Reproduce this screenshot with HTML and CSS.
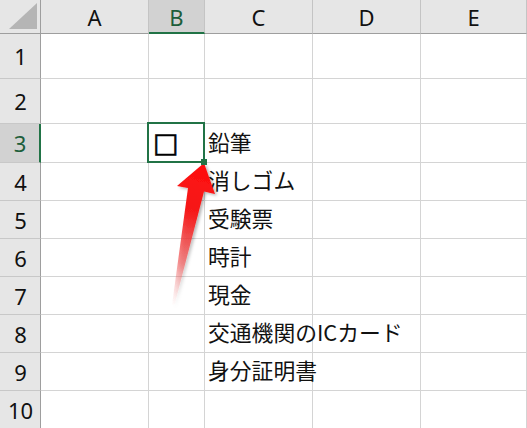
FILE: index.html
```html
<!DOCTYPE html>
<html lang="ja">
  <head>
    <meta charset="UTF-8" />
    <title>チェックリスト</title>
    <link rel="stylesheet" href="styles.css">
  </head>
  <body>
    <div class="sheet">
      <div class="grid">
        <!-- header row -->
        <div class="corner"><span class="corner-mark"></span></div>
        <div class="colhead">A</div>
        <div class="colhead active">B</div>
        <div class="colhead">C</div>
        <div class="colhead">D</div>
        <div class="colhead">E</div>

        <div class="rowhead">1</div>
        <div class="cell"></div><div class="cell"></div><div class="cell"></div><div class="cell"></div><div class="cell"></div>

        <div class="rowhead">2</div>
        <div class="cell"></div><div class="cell"></div><div class="cell"></div><div class="cell"></div><div class="cell"></div>

        <div class="rowhead active">3</div>
        <div class="cell"></div>
        <div class="cell selected"><span class="box">□</span></div>
        <div class="cell text">鉛筆</div>
        <div class="cell"></div><div class="cell"></div>

        <div class="rowhead">4</div>
        <div class="cell"></div><div class="cell"></div>
        <div class="cell text">消しゴム</div>
        <div class="cell"></div><div class="cell"></div>

        <div class="rowhead">5</div>
        <div class="cell"></div><div class="cell"></div>
        <div class="cell text">受験票</div>
        <div class="cell"></div><div class="cell"></div>

        <div class="rowhead">6</div>
        <div class="cell"></div><div class="cell"></div>
        <div class="cell text">時計</div>
        <div class="cell"></div><div class="cell"></div>

        <div class="rowhead">7</div>
        <div class="cell"></div><div class="cell"></div>
        <div class="cell text">現金</div>
        <div class="cell"></div><div class="cell"></div>

        <div class="rowhead">8</div>
        <div class="cell"></div><div class="cell"></div>
        <div class="cell text">交通機関のICカード</div>
        <div class="cell"></div><div class="cell"></div>

        <div class="rowhead">9</div>
        <div class="cell"></div><div class="cell"></div>
        <div class="cell text">身分証明書</div>
        <div class="cell"></div><div class="cell"></div>

        <div class="rowhead">10</div>
        <div class="cell"></div><div class="cell"></div><div class="cell"></div><div class="cell"></div><div class="cell"></div>
      </div>

      <!-- red pointer to the fill handle -->
      <svg class="arrow" width="527" height="428" viewBox="0 0 527 428">
        <defs>
          <linearGradient id="arrowFill" gradientUnits="userSpaceOnUse" x1="204" y1="163" x2="172" y2="306">
            <stop offset="0" stop-color="#ff0d0d" />
            <stop offset="0.35" stop-color="#f51a1a" />
            <stop offset="0.7" stop-color="#f04848" stop-opacity="0.6" />
            <stop offset="1" stop-color="#f4a0a0" stop-opacity="0" />
          </linearGradient>
          <filter id="arrowShadow" x="-30%" y="-10%" width="160%" height="130%">
            <feDropShadow dx="2" dy="1.5" stdDeviation="1.5" flood-color="#000" flood-opacity="0.3" />
          </filter>
        </defs>
        <polygon filter="url(#arrowShadow)" fill="url(#arrowFill)"
          points="204,163 215,194 204,191.5 174.5,305 172,305 188,188 177,186" />
      </svg>
    </div>
  </body>
</html>
```

FILE: styles.css
```css
body {
  margin: 0;
  background: white;
  overflow: hidden;
  font-family: "Noto Sans CJK JP", "Noto Sans", sans-serif;
}
.sheet {
  position: relative;
  width: 527px;
  height: 428px;
  overflow: hidden;
}
.grid {
  display: grid;
  grid-template-columns: 41px 108px 56px 108px 108px 1fr;
  grid-template-rows: 34px 45px 45px 39px repeat(7, 38px);
}
.grid > div {
  box-sizing: border-box;
}
.corner {
  background: #e6e6e6;
  border-right: 1px solid #9e9e9e;
  border-bottom: 1px solid #9e9e9e;
  position: relative;
}
.corner-mark {
  position: absolute;
  left: 9px;
  top: 3px;
  width: 28px;
  height: 26px;
  background: #b5b5b5;
  clip-path: polygon(100% 0, 100% 100%, 0 100%);
}
.colhead {
  background: #e6e6e6;
  border-right: 1px solid #c4c4c4;
  border-bottom: 1px solid #9e9e9e;
  display: flex;
  align-items: center;
  justify-content: center;
  font-family: "Noto Sans", sans-serif;
  font-size: 22px;
  line-height: 1;
  color: #111;
  padding-top: 1px;
}
.colhead.active {
  background: #d2d2d2;
  border-bottom: 2px solid #217346;
  color: #1d5e3a;
}
.rowhead {
  background: #e6e6e6;
  border-right: 1px solid #9e9e9e;
  border-bottom: 1px solid #c8c8c8;
  display: flex;
  align-items: center;
  justify-content: center;
  font-family: "Noto Sans", sans-serif;
  font-size: 22px;
  line-height: 1;
  color: #111;
  padding-left: 1px;
}
.rowhead.active {
  background: #d2d2d2;
  border-right: 2px solid #217346;
  color: #1d5e3a;
}
.cell {
  border-right: 1px solid #d4d4d4;
  border-bottom: 1px solid #d4d4d4;
  display: flex;
  align-items: center;
  white-space: nowrap;
  font-size: 21.8px;
  line-height: 1;
  color: #111;
}
.text {
  padding-left: 3px;
  padding-bottom: 3px;
}
.box {
  font-family: "DejaVu Sans", sans-serif;
  font-size: 27px;
  color: #000;
  -webkit-text-stroke: 0.6px #000;
  padding-left: 4px;
  padding-bottom: 2px;
}
.selected {
  position: relative;
}
.selected::after {
  content: "";
  position: absolute;
  left: -2px;
  top: -2px;
  right: -1px;
  bottom: -1px;
  border: 2px solid #217346;
}
.selected::before {
  content: "";
  position: absolute;
  right: -3px;
  bottom: -3px;
  width: 6px;
  height: 6px;
  background: #217346;
  z-index: 2;
}
.arrow {
  position: absolute;
  left: 0;
  top: 0;
  pointer-events: none;
}
```
